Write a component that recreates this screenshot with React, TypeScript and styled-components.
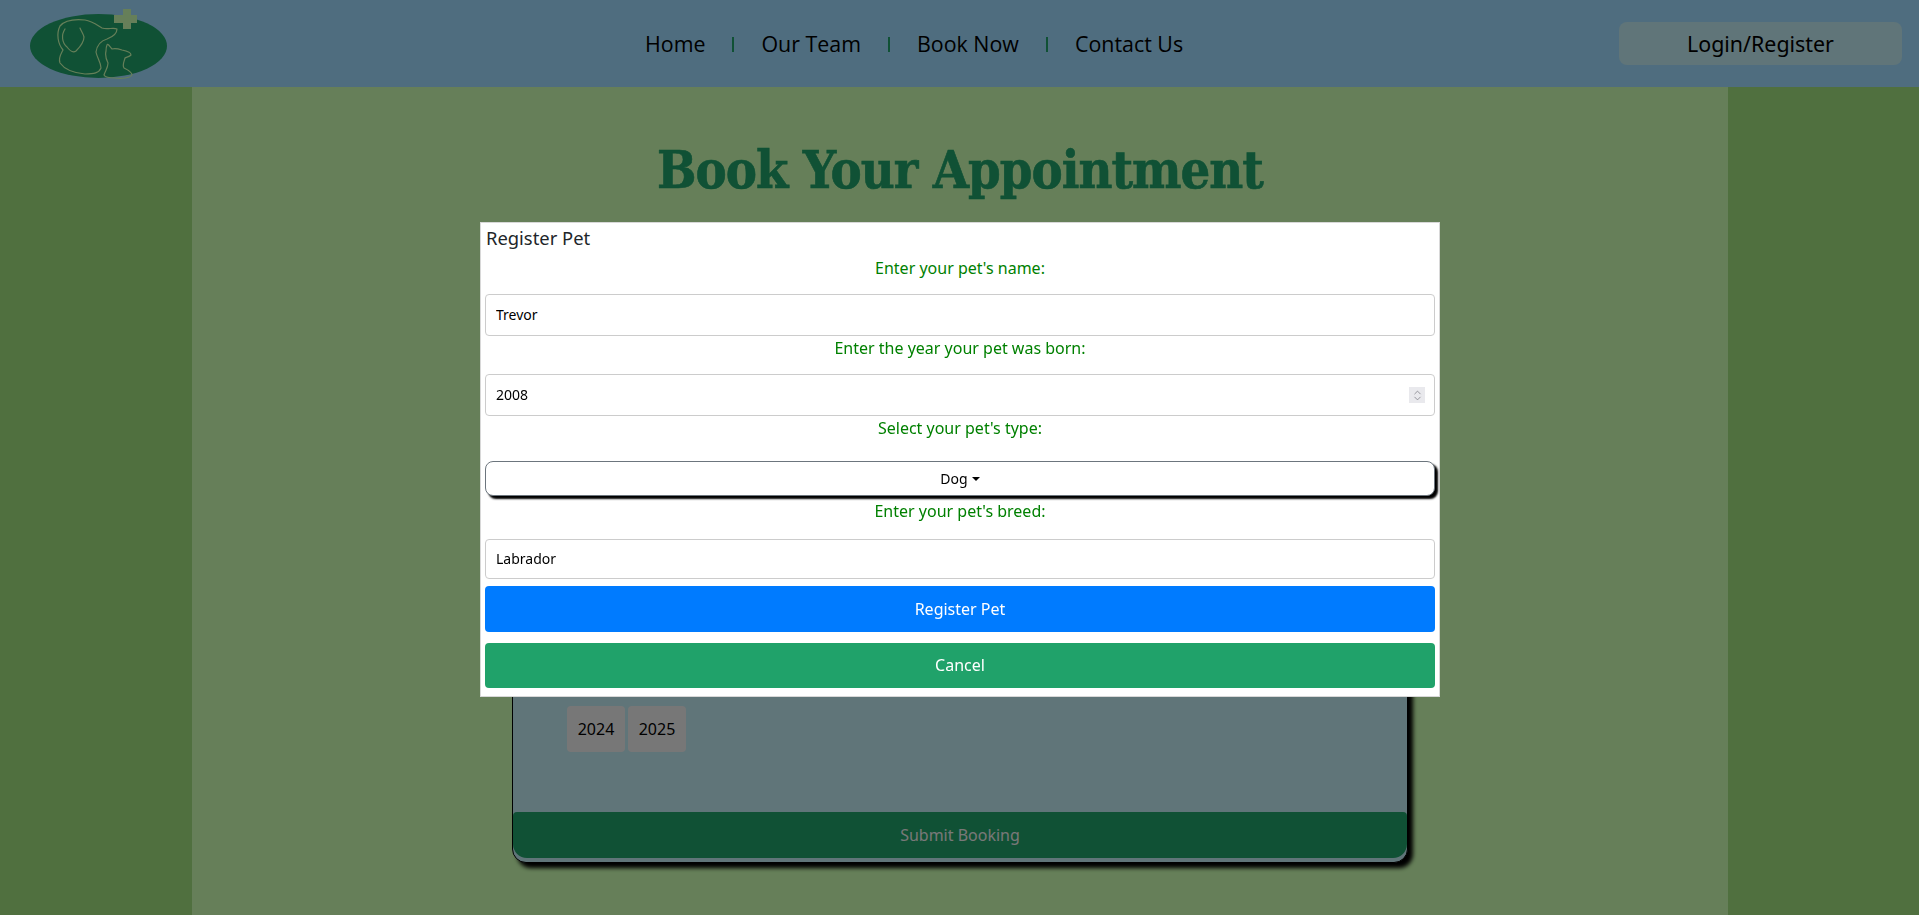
import styled, { createGlobalStyle } from 'styled-components';
import { ChevronDown, ChevronUp } from 'lucide-react';

const GlobalStyle = createGlobalStyle`
	html,
	body {
		margin: 0;
		padding: 0;
	}
	body {
		font-family: 'Noto Sans', sans-serif;
		background: #a0e07e;
	}
	* {
		box-sizing: border-box;
	}
`;

function Logo() {
	return (
		<LogoSvg viewBox="30 9 137 70" aria-label="logo">
			<ellipse cx="98.5" cy="46" rx="68.5" ry="32" fill="#20a26a" />
			<path d="M114 15h9v-6h8v6h6v8h-6v6h-8v-6h-9z" fill="#ccffb2" />
			<g fill="none" stroke="#ccffb2" strokeWidth="1.2" strokeLinecap="round" strokeLinejoin="round">
				<path d="M63 50C58 44 56 34 60 26C65 20 75 19 85 20C92 21 97 25 102 28C108 30 113 27 117 29C117 33 115 36 107 39C100 41 97 45 96 52C97 58 101 62 101 68C99 73 94 74 85 74C74 73 65 70 60 63C58 58 61 54 63 50" />
				<path d="M65 29C61 35 62 43 67 47C70 51 73 53 76 51C80 47 84 41 84 37C83 33 81 31 80 28" />
				<path d="M107 45C108 43 110 47 112 49C115 48 119 49 122 50C127 51 131 52 131 55C129 57 126 57 125 58C124 62 122 65 124 68C128 70 132 72 132 75C130 78 122 79 115 78C110 78 105 77 104 75C105 71 108 68 108 63C106 59 105 55 106 51C106 49 106 47 107 45" />
			</g>
		</LogoSvg>
	);
}

const navItems = ['Home', 'Our Team', 'Book Now', 'Contact Us'];

function App() {
	return (
		<>
			<GlobalStyle />
			<Header>
				<Logo />
				<Nav>
					{navItems.map((item, i) => (
						<NavGroup key={item}>
							{i > 0 && <NavDivider />}
							<NavLink>{item}</NavLink>
						</NavGroup>
					))}
				</Nav>
				<LoginButton>Login/Register</LoginButton>
			</Header>
			<Page>
				<Content>
					<Title>Book Your Appointment</Title>
					<BookingCard>
						<YearRow>
							<YearButton>2024</YearButton>
							<YearButton>2025</YearButton>
						</YearRow>
						<SubmitButton>Submit Booking</SubmitButton>
					</BookingCard>
				</Content>
			</Page>
			<Backdrop />
			<Modal>
				<ModalTitle>Register Pet</ModalTitle>
				<FieldLabel>Enter your pet's name:</FieldLabel>
				<TextField type="text" defaultValue="Trevor" />
				<FieldLabel>Enter the year your pet was born:</FieldLabel>
				<NumberWrap>
					<TextField type="number" defaultValue={2008} />
					<SpinBox>
						<ChevronUp size={11} strokeWidth={1.6} />
						<ChevronDown size={11} strokeWidth={1.6} />
					</SpinBox>
				</NumberWrap>
				<FieldLabel>Select your pet's type:</FieldLabel>
				<DropdownButton>Dog</DropdownButton>
				<BreedLabel>Enter your pet's breed:</BreedLabel>
				<BreedField type="text" defaultValue="Labrador" />
				<RegisterButton>Register Pet</RegisterButton>
				<CancelButton>Cancel</CancelButton>
			</Modal>
		</>
	);
}

const Header = styled.header`
	display: flex;
	align-items: center;
	height: 87px;
	padding: 0 17px 0 30px;
	background: #9edafe;
`;

const LogoSvg = styled.svg`
	flex: none;
	width: 137px;
	height: 70px;
`;

const Nav = styled.nav`
	display: flex;
	margin-left: 478px;
	font-family: 'Open Sans', sans-serif;
	font-size: 21.4px;
`;

const NavGroup = styled.div`
	display: flex;
	align-items: center;
`;

const NavLink = styled.span`
	color: #000;
	white-space: nowrap;
`;

const NavDivider = styled.span`
	width: 2px;
	height: 15px;
	margin: 2px 27px 0;
	background: #20a26a;
`;

const LoginButton = styled.button`
	width: 283px;
	height: 43px;
	margin-left: auto;
	padding: 0;
	border: 0;
	border-radius: 8px;
	background: #c0eaf2;
	color: #000;
	font-family: 'Noto Sans', sans-serif;
	font-size: 21.4px;
`;

const Page = styled.main`
	display: flex;
	justify-content: center;
	height: 828px;
	padding: 0 191px 0 192px;
	background: #a0e07e;
`;

const Content = styled.div`
	display: flex;
	flex: 1;
	flex-direction: column;
	align-items: center;
	background: #ccffb2;
`;

const Title = styled.h1`
	margin: 40px 0 0;
	color: #20a26a;
	font-family: 'DejaVu Serif', serif;
	font-size: 52px;
	font-stretch: condensed;
	font-weight: 700;
	letter-spacing: -1px;
	line-height: 86px;
	-webkit-text-stroke: 0.6px #20a26a;
`;

const BookingCard = styled.section`
	display: flex;
	flex-direction: column;
	justify-content: flex-end;
	width: 896px;
	height: 641px;
	margin-top: 9px;
	padding-bottom: 4px;
	border: 1px solid #000;
	border-radius: 14px;
	background: #c0eaf2;
	box-shadow: 5px 5px 4px #000;
`;

const YearRow = styled.div`
	display: flex;
	gap: 3px;
	margin: 0 0 60px 54px;
`;

const YearButton = styled.button`
	width: 58px;
	height: 46px;
	padding: 0;
	border: 0;
	border-radius: 4px;
	background: #efefef;
	color: #000;
	font-family: 'Noto Sans', sans-serif;
	font-size: 16px;
`;

const SubmitButton = styled.button`
	height: 46px;
	border: 0;
	border-radius: 4px 4px 14px 14px;
	background: #20a26a;
	color: #f0f0f0;
	font-family: 'Noto Sans', sans-serif;
	font-size: 16px;
`;

const Backdrop = styled.div`
	position: fixed;
	inset: 0;
	background: rgb(0 0 0 / 50%);
`;

const Modal = styled.div`
	position: fixed;
	top: 222px;
	left: 480px;
	display: flex;
	flex-direction: column;
	width: 960px;
	height: 475px;
	padding: 4px 4px 9px;
	border: 1px solid #d8d8d8;
	background: #fff;
`;

const ModalTitle = styled.h2`
	margin: -1px 0 6px 1px;
	color: #212529;
	font-size: 18.4px;
	font-weight: 400;
	line-height: 24px;
`;

const FieldLabel = styled.label`
	margin-bottom: 14px;
	color: green;
	font-size: 16px;
	line-height: 24px;
	text-align: center;
`;

const BreedLabel = styled(FieldLabel)`
	margin-top: 3px;
	margin-bottom: 16px;
`;

const TextField = styled.input`
	width: 100%;
	height: 42px;
	flex: none;
	padding: 0 10px 2px;
	border: 1px solid #ccc;
	border-radius: 4px;
	background: #fff;
	color: #000;
	font-family: 'Noto Sans', sans-serif;
	font-size: 14px;
	appearance: textfield;

	&::-webkit-inner-spin-button {
		display: none;
	}
`;

const BreedField = styled(TextField)`
	height: 40px;
`;

const NumberWrap = styled.div`
	position: relative;
	flex: none;
`;

const SpinBox = styled.div`
	position: absolute;
	top: 13px;
	right: 10px;
	display: flex;
	flex-direction: column;
	align-items: center;
	justify-content: center;
	width: 16px;
	height: 16px;
	background: #e9e9ed;
	color: #77777f;

	svg {
		margin: -2.5px 0;
	}
`;

const DropdownButton = styled.button`
	flex: none;
	height: 35px;
	margin-top: 7px;
	border: 1px solid #6c757d;
	border-radius: 8px;
	background: #fff;
	box-shadow: 3px 3px 2px #000;
	color: #000;
	font-family: 'Noto Sans', sans-serif;
	font-size: 14px;

	&::after {
		content: '';
		display: inline-block;
		margin-left: 4px;
		border-top: 4px solid;
		border-right: 4px solid transparent;
		border-left: 4px solid transparent;
		vertical-align: 3px;
	}
`;

const ModalButton = styled.button`
	flex: none;
	padding-bottom: 3px;
	border: 0;
	border-radius: 4px;
	color: #fff;
	font-family: 'Noto Sans', sans-serif;
	font-size: 16px;
`;

const RegisterButton = styled(ModalButton)`
	height: 46px;
	margin-top: 7px;
	padding-bottom: 2px;
	background: #007bff;
`;

const CancelButton = styled(ModalButton)`
	height: 45px;
	margin-top: 11px;
	background: #20a26a;
`;

export default App;
